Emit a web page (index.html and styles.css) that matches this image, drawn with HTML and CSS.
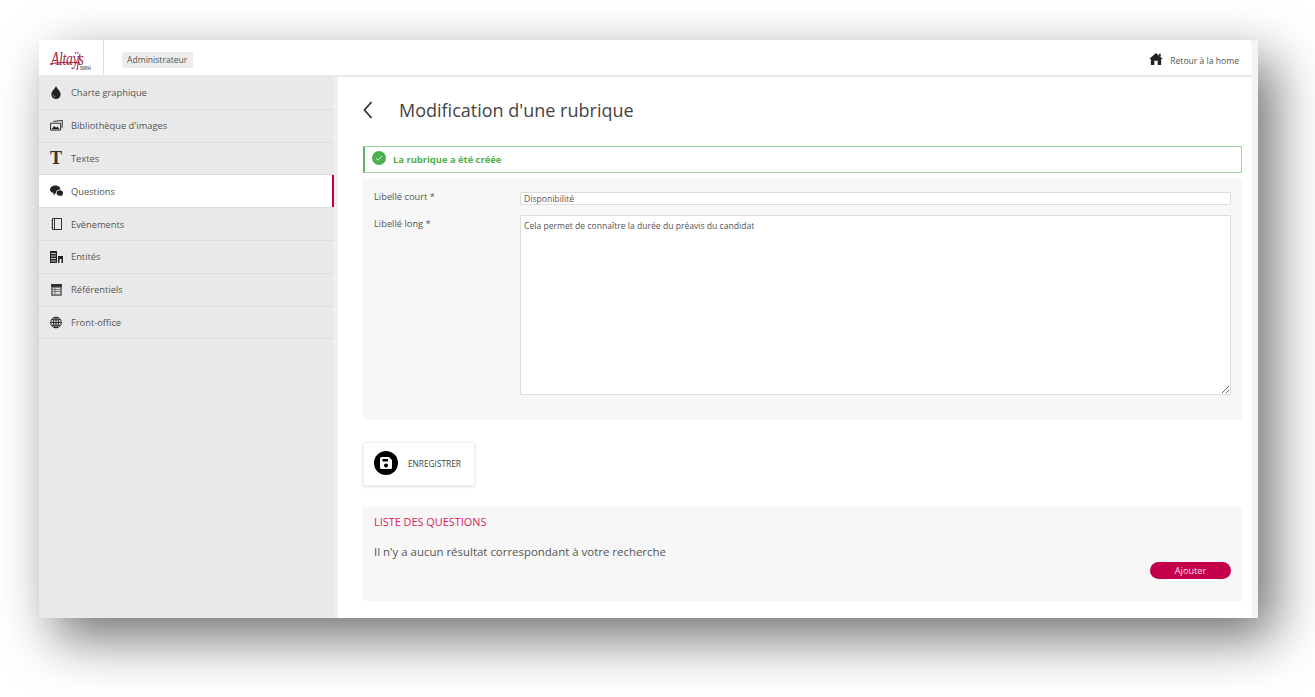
FILE: index.html
```html
<!DOCTYPE html>
<html lang="fr">
<head>
<meta charset="utf-8">
<title>Modification d'une rubrique</title>
<link rel="stylesheet" href="styles.css">
</head>
<body>
<div class="frame">
  <div class="app">
    <header class="topbar">
      <div class="logo">
        <span class="logo-name">Altaÿs</span><span class="logo-sub">SIRH</span>
        <svg class="logo-swash" viewBox="0 0 40 20" aria-hidden="true"><path d="M0 13 C10 11 22 11 30 12" fill="none" stroke="#a3243f" stroke-width="1"/><path d="M30 3 L27 19" fill="none" stroke="#b01f45" stroke-width="1.200"/></svg>
      </div>
      <div class="role"><span class="role-tag">Administrateur</span></div>
      <a class="home">
        <svg class="home-icon" viewBox="0 0 16 14" aria-hidden="true"><path d="M8 0 L16 7 L14 7 L14 14 L10 14 L10 9 L6 9 L6 14 L2 14 L2 7 L0 7 Z M11.5 1 L13.5 1 L13.5 4.5 L11.5 2.8 Z" fill="#222"/></svg>
        <span>Retour à la home</span>
      </a>
    </header>
    <div class="body">
      <nav class="side">
        <a class="nav-item"><span class="nav-ico"><svg viewBox="0 0 12 14" class="ico-12"><path d="M6 0 C7 3 11 5.5 11 9 A5 5 0 0 1 1 9 C1 5.5 5 3 6 0 Z" fill="#222"/><path d="M3 9 A3 3 0 0 0 5.500 12" fill="none" stroke="#999" stroke-width=".8"/></svg></span>Charte graphique</a>
        <a class="nav-item"><span class="nav-ico"><svg viewBox="0 0 14 12" class="ico-14"><path d="M3.5 1.5 L13.5 .5 L13 8.5 M.5 3.5 H11.5 V11 H.5 Z" fill="none" stroke="#222"/><path d="M1.5 10 L4.5 6.5 L6.5 8.5 L8 7 L10.5 10 Z" fill="#222"/></svg></span>Bibliothèque d'images</a>
        <a class="nav-item"><span class="nav-ico nav-t">T</span>Textes</a>
        <a class="nav-item active"><span class="nav-ico"><svg viewBox="0 0 13 11" class="ico-13"><path d="M5.5 0 C8.5 0 10.5 1.7 10.5 4 C8 3.6 6 5 5.8 7.6 L3.5 10 L3.6 7.6 C1.4 7 0 5.700 0 4 C0 1.700 2.400 0 5.500 0 Z" fill="#222"/><ellipse cx="9.800" cy="7.400" rx="3.200" ry="2.700" fill="#222"/><path d="M11 9 L12.500 11 L9.500 9.800 Z" fill="#222"/></svg></span>Questions</a>
        <a class="nav-item"><span class="nav-ico"><svg viewBox="0 0 11 12" class="ico-11"><path d="M1.500 .5 H10.500 V11.500 H1.500 Z M3.500 .5 V11.500" fill="none" stroke="#333"/><path d="M.3 2.500 H2 M.3 6 H2 M.3 9.500 H2" stroke="#333"/></svg></span>Evènements</a>
        <a class="nav-item"><span class="nav-ico"><svg viewBox="0 0 13 12" class="ico-13"><path d="M0 0 H7 V12 H0 Z" fill="#222"/><path d="M1 2.500 H6 M1 5 H6 M1 7.500 H6 M1 10 H6" stroke="#eee" stroke-width=".8"/><path d="M8 5 H13 V12 H11.500 V8 H9.500 V12 H8 Z" fill="#222"/></svg></span>Entités</a>
        <a class="nav-item"><span class="nav-ico"><svg viewBox="0 0 11 12" class="ico-11"><path d="M0 0 H11 V12 H0 Z" fill="#bbb"/><path d="M0 0 H11 V2.500 H0 Z M.5 2 H10.500 V11.500 H.5 Z" fill="#333"/><path d="M1.500 3.500 H9.500 V10.500 H1.500 Z" fill="#ddd"/><path d="M1.500 5.500 H9.500 M1.500 7.500 H9.500 M4 3.500 V10.500" stroke="#555" stroke-width=".7"/></svg></span>Référentiels</a>
        <a class="nav-item"><span class="nav-ico"><svg viewBox="0 0 12 12" class="ico-12"><g fill="none" stroke="#222"><circle cx="6" cy="6" r="5.300"/><ellipse cx="6" cy="6" rx="2.500" ry="5.300"/><path d="M.7 6 H11.300 M1.500 3.300 H10.500 M1.500 8.700 H10.500 M6 .7 V11.300"/></g></svg></span>Front-office</a>
      </nav>
      <main class="main">
        <div class="title-row">
          <svg class="back" viewBox="0 0 10 18" aria-hidden="true"><path d="M8.500 1 L1.500 9 L8.500 17" fill="none" stroke="#333" stroke-width="1.800"/></svg>
          <h1 class="title">Modification d'une rubrique</h1>
        </div>
        <div class="alert">
          <svg class="alert-ico" viewBox="0 0 14 14" aria-hidden="true"><circle cx="7" cy="7" r="7" fill="#4caf50"/><path d="M4 7.200 L6.200 9.200 L10 5" fill="none" stroke="#d5efd6" stroke-width="1"/></svg>
          <span>La rubrique a été créée</span>
        </div>
        <section class="panel form">
          <div class="field">
            <label class="label">Libellé court *</label>
            <input class="input" type="text" value="Disponibilité">
          </div>
          <div class="field">
            <label class="label label-long">Libellé long *</label>
            <textarea class="textarea">Cela permet de connaître la durée du préavis du candidat</textarea>
          </div>
        </section>
        <button class="save" type="button">
          <span class="save-ico"><svg viewBox="0 0 12 12" class="save-svg"><path d="M1.500 0 H9 L12 3 V10.500 A1.500 1.500 0 0 1 10.500 12 H1.500 A1.500 1.500 0 0 1 0 10.500 V1.500 A1.500 1.500 0 0 1 1.500 0 Z M2.500 2 V4.500 H8 V2 Z M6 6.500 A2 2 0 1 0 6 10.500 A2 2 0 1 0 6 6.500 Z" fill="#fff" fill-rule="evenodd"/></svg></span>
          <span>ENREGISTRER</span>
        </button>
        <section class="panel list">
          <h2 class="list-title">LISTE DES QUESTIONS</h2>
          <p class="empty">Il n'y a aucun résultat correspondant à votre recherche</p>
          <div class="actions"><button class="add" type="button">Ajouter</button></div>
        </section>
      </main>
      <div class="track"></div>
    </div>
  </div>
</div>
</body>
</html>
```

FILE: styles.css
```css
* { box-sizing: border-box; }
html, body { margin: 0; height: 697px; overflow: hidden; background: #fff; }
body { padding: 40px 57px 0 39px; font-family: "Open Sans", "Liberation Sans", sans-serif; color: #555; }
a { color: inherit; text-decoration: none; }

.frame { height: 578px; background: #f3f3f3; box-shadow: 16px 20px 50px rgba(0,0,0,.56); }
.app { height: 100%; display: flex; flex-direction: column; }

.topbar { height: 37px; flex: none; display: flex; align-items: stretch; background: #fff; border-bottom: 2px solid #e8e8e8; margin-right: 6px; border-top-right-radius: 5px; }
.logo { width: 65px; flex: none; border-right: 1px solid #ddd; position: relative; color: #a3243f; }
.logo-name { position: absolute; left: 12px; top: 11px; font: italic 400 19px/15px "Liberation Serif", serif; letter-spacing: -.4px; transform: scaleX(.72); transform-origin: left; }
.logo-sub { position: absolute; left: 41px; top: 26px; font: 700 4.500px/5px "Liberation Sans", sans-serif; color: #666; }
.logo-swash { position: absolute; left: 11px; top: 11px; width: 40px; height: 20px; }
.role { flex: 1; display: flex; align-items: center; padding: 4px 0 0 18px; }
.role-tag { background: #ececec; font-size: 8.600px; line-height: 16px; padding: 0 6px 0 5px; border-radius: 1px; }
.home { display: flex; align-items: center; gap: 7px; font-size: 8.600px; padding: 6px 13px 0 0; }
.home-icon { width: 14px; height: 12px; margin-top: -3px; }

.body { flex: 1; display: flex; min-height: 0; }
.side { width: 299px; flex: none; background: #e9e9e9; border-right: 4px solid #f0f0f0; }
.nav-item { height: 32.800px; display: flex; align-items: center; padding-left: 10px; font-size: 9.300px; color: #555; border-bottom: 1px solid #dcdcdc; }
.nav-ico { width: 22px; flex: none; display: flex; align-items: center; justify-content: center; padding-right: 8px; }
.nav-t { font: 700 18px/16px "Liberation Serif", serif; color: #333; }
.ico-11 { width: 11px; height: 12px; }
.ico-12 { width: 12px; height: 13px; }
.ico-13 { width: 13px; height: 12px; }
.ico-14 { width: 13px; height: 11px; }
.active { background: #fff; box-shadow: inset -2px 0 0 #c4004b; }

.main { flex: 1; min-width: 0; background: #fff; padding: 0 10px 0 25px; }
.title-row { height: 66px; margin-bottom: 3px; display: flex; align-items: center; }
.back { width: 10px; height: 18px; }
.title { margin: 0 0 0 26px; font-size: 18px; font-weight: 400; color: #444; }
.alert { height: 27px; display: flex; align-items: center; gap: 7px; padding-left: 7px; border: 1px solid #9ad39d; border-left: 2px solid #5cb860; color: #4caf50; font-size: 9.400px; font-weight: 700; }
.alert-ico { width: 14px; height: 14px; margin-top: -3px; }
.panel { background: #f7f7f7; }
.form { height: 241px; margin-top: 6px; padding: 13px 11px 0; display: flex; flex-direction: column; gap: 10px; }
.field { display: flex; }
.label { width: 146px; flex: none; font-size: 9.300px; line-height: 10px; }
.label-long { margin-top: 4px; }
.input, .textarea { flex: 1; min-width: 0; margin: 0; background: #fff; border: 1px solid #ddd; border-radius: 1px; color: #555; font-family: inherit; font-size: 8.600px; }
.input { height: 13px; padding: 0 3px; line-height: 11px; }
.textarea { height: 180px; padding: 3px; line-height: 14px; resize: vertical; display: block; outline: none; }
.save { display: flex; align-items: center; gap: 10px; width: 112px; height: 44px; margin: 22px 0 0; padding: 0 0 2px 10px; background: #fff; border: 1px solid #eee; border-radius: 2px; box-shadow: 0 1px 3px rgba(0,0,0,.12); font-family: inherit; font-size: 8.300px; color: #444; }
.save-ico { width: 24px; height: 24px; flex: none; border-radius: 50%; background: #000; display: flex; align-items: center; justify-content: center; }
.save-svg { width: 12px; height: 12px; }
.list { height: 94px; margin-top: 21px; padding: 8px 11px 0; }
.list-title { margin: 0; font-size: 10.900px; line-height: 14px; font-weight: 400; color: #d81b60; }
.empty { margin: 15px 0 0; font-size: 11.450px; line-height: 16px; color: #555; }
.actions { display: flex; justify-content: flex-end; }
.add { width: 81px; height: 17px; margin-top: 2px; padding: 0; border: 0; border-radius: 9px; background: #c4004b; color: #fde; font-family: inherit; font-size: 9.200px; }
.track { width: 6px; flex: none; background: #f3f3f3; }
```
